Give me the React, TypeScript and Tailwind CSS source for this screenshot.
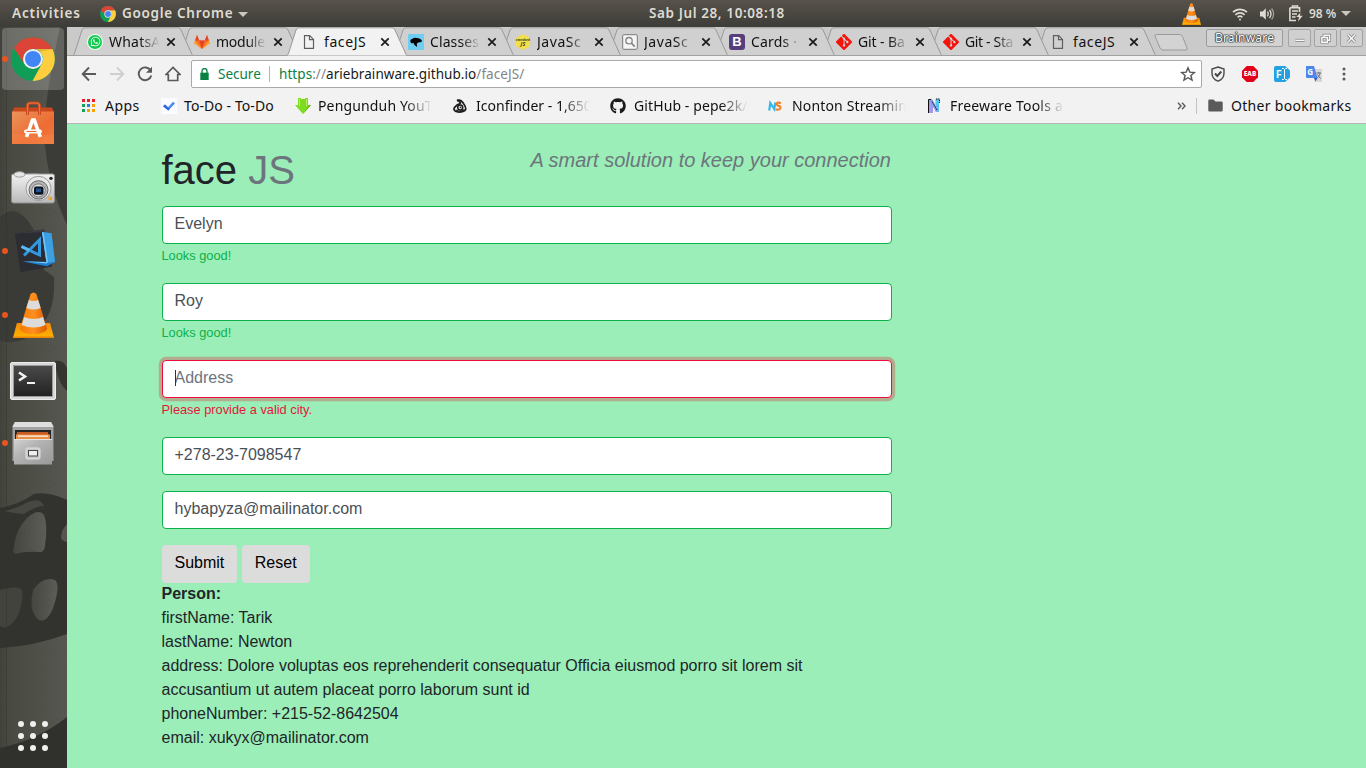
import React from "react";
import { FaGithub, FaWhatsapp } from "react-icons/fa";
import { SiGit } from "react-icons/si";

const ubuntu = "font-['Noto_Sans','Open_Sans',sans-serif]";
const liberation = "font-['Liberation_Sans',Arial,sans-serif]";

/* ---------- shared icons ---------- */

function ChromeIcon({ size }: { size: number }) {
  return (
    <svg width={size} height={size} viewBox="0 0 44 44">
      <circle cx="22" cy="22" r="22" fill="#0f9d58" />
      <path d="M2.9 11A22 22 0 0 1 41.1 11.5L41.4 12H22a10 10 0 0 0-8.7 15z" fill="#db4437" />
      <path d="M41.4 12A22 22 0 0 1 21.5 44L30.7 27A10 10 0 0 0 22 12z" fill="#ffcd40" />
      <path d="M22 12h19.4l-18 4z" fill="#000" opacity=".12" />
      <circle cx="22" cy="22" r="10" fill="#f1f1f1" />
      <circle cx="22" cy="22" r="8" fill="#4285f4" />
    </svg>
  );
}

function VlcIcon({ width, height }: { width: number; height: number }) {
  return (
    <svg width={width} height={height} viewBox="0 0 42 46" preserveAspectRatio="none">
      <defs>
        <linearGradient id="coneBase" x1="0" y1="0" x2="0" y2="1">
          <stop offset="0" stopColor="#f58a0b" />
          <stop offset="1" stopColor="#ffb400" />
        </linearGradient>
        <linearGradient id="coneBody" x1="0" y1="0" x2="1" y2="0">
          <stop offset="0" stopColor="#f57900" />
          <stop offset=".5" stopColor="#ff9020" />
          <stop offset="1" stopColor="#d95b00" />
        </linearGradient>
      </defs>
      <path d="M4 31h34l4 15H0z" fill="url(#coneBase)" />
      <path d="M18 2q3-3 6 0l11 35q-3 5-14 5T7 37z" fill="url(#coneBody)" />
      <path d="M16.200 8q4.800 1.800 9.600 0l2.500 8q-7 3-14.600 0z" fill="#dcdcdc" />
      <path d="M11.500 25q9.500 4 19.200 0l2.600 8q-12 5-24.400 0z" fill="#dcdcdc" />
      <path d="M0 44.500h42V46H0z" fill="#e8850a" />
    </svg>
  );
}

function PageIcon() {
  return (
    <svg width="16" height="16" viewBox="0 0 16 16" fill="none" stroke="#5f5f5f" strokeWidth="1.200">
      <path d="M3.500 1.600h5.200l3.800 3.800v9H3.500z" />
      <path d="M8.500 1.800v3.900h3.800" />
    </svg>
  );
}

/* ---------- top panel ---------- */

function TopPanel() {
  return (
    <header className={`flex h-[27px] shrink-0 items-center bg-linear-to-b from-[#57534b] to-[#3d3c38] text-[13.500px] font-semibold text-[#dfdbd2] ${ubuntu}`}>
      <div className="flex w-[649px] shrink-0 items-center pl-[12px]">
        <span className="w-[88px] tracking-[0.850px] whitespace-nowrap">Activities</span>
        <ChromeIcon size={16} />
        <span className="ml-[6px] w-[116px] tracking-[0.700px] whitespace-nowrap">Google Chrome</span>
        <span className="mt-px h-0 w-0 border-x-[5px] border-t-[5px] border-x-transparent border-t-[#c9c6be]" />
      </div>
      <span className="w-[140px] text-[13.500px] tracking-[0.600px] whitespace-nowrap">Sab Jul 28, 10:08:18</span>
      <div className="flex flex-1 items-center justify-end pr-[15px]">
        <VlcIcon width={19} height={22} />
        <svg className="ml-[31px]" width="16" height="16" viewBox="0 0 16 16" fill="none" stroke="#dfdbd2" strokeWidth="1.700">
          <path d="M1 6.200a10 10 0 0 1 14 0" />
          <path d="M3.400 8.800a6.600 6.600 0 0 1 9.200 0" />
          <path d="M5.600 11.300a3.600 3.600 0 0 1 4.800 0" />
          <circle cx="8" cy="13.600" r="1" fill="#dfdbd2" stroke="none" />
        </svg>
        <svg className="ml-[11px]" width="16" height="16" viewBox="0 0 16 16" fill="none" stroke="#dfdbd2" strokeWidth="1.300">
          <path d="M1 5.500h2.600L6.800 2.300v11.400L3.600 10.500H1z" fill="#dfdbd2" stroke="none" />
          <path d="M8.400 5.700q1.600 2.300 0 4.600M10.500 4q3 4 0 8" />
          <path d="M12.600 2.500q4 5.500 0 11" opacity=".6" />
        </svg>
        <svg className="ml-[13px]" width="16" height="17" viewBox="0 0 16 17">
          <path d="M4.500 2.700V1h5v1.700h2V7M1.700 2.700h10M1.900 3v12.500H8" fill="none" stroke="#dfdbd2" strokeWidth="1.600" />
          <path d="M4 5.200h6v1.600H4zM4 8.200h5v1.600H4zM4 11.200h3.500v1.600H4z" fill="#dfdbd2" />
          <path d="M12.500 7.500L8.300 12h2.700l-1 4.500 4.700-5.700h-2.800z" fill="#dfdbd2" />
        </svg>
        <span className="ml-[5px] w-[32px] text-[12px] whitespace-nowrap">98 %</span>
        <span className="h-0 w-0 border-x-[5px] border-t-[5px] border-x-transparent border-t-[#c9c6be]" />
      </div>
    </header>
  );
}

/* ---------- dock ---------- */

function Wallpaper() {
  return (
    <svg className="absolute inset-0" width="67" height="741" viewBox="0 27 67 741">
      <defs>
        <linearGradient id="wall" x1="0" y1="0" x2="1" y2="0">
          <stop offset="0" stopColor="#41423b" />
          <stop offset=".12" stopColor="#484941" />
          <stop offset="1" stopColor="#565750" />
        </linearGradient>
        <linearGradient id="wallEye" x1="0" y1="0" x2="1" y2="0">
          <stop offset="0" stopColor="#44463f" />
          <stop offset="1" stopColor="#5c5e57" />
        </linearGradient>
        <pattern id="digits" width="9" height="17" patternUnits="userSpaceOnUse">
          <ellipse cx="4" cy="8" rx="2.500" ry="3.500" fill="none" stroke="#2f332b" strokeWidth="1" opacity=".1" />
        </pattern>
      </defs>
      <rect y="27" width="67" height="741" fill="url(#wall)" />
      <path d="M60 27h7v198q-20-42-23-91 2-45 16-107z" fill="#3b3c37" />
      <path d="M0 217Q8 209 17 212 30 218 38 240l6 30 10 7q2 36-16 52-16 17-38 12z" fill="#3a3b36" />
      <path d="M55 361q8-2 12 7v23q-10-9-12-30z" fill="#34352f" />
      <path d="M0 508q20-4 34-14 14-3 33 6v134Q35 646 0 648z" fill="#32322e" />
      <path d="M4 511q14-3 24-9 12-5 16 4-8 0-20 8-12-1-20-3z" fill="#474841" />
      <path d="M14 546q2-17 13-28 12-10 17-3 4 10 1 31-1 7-6 6-14-1-23 2-4 0-2-8z" fill="url(#wallEye)" />
      <path d="M61 538q0-8 6-14v18q-5-1-6-4z" fill="#55564f" />
      <path d="M0 590q17-5 21-1 3 4 0 17-3 14-12 20-4 3-9 0z" fill="#42433d" />
      <path d="M33 590q10-14 22-10 5 4 0 22-4 15-11 18-5 2-9-4-6-9-2-26z" fill="url(#wallEye)" />
      <path d="M0 748q38-8 67-31v51H0z" fill="#30312d" />
      <rect y="27" width="67" height="741" fill="url(#digits)" />
      <path d="M6.500 27v741" stroke="#2e2f2a" strokeWidth="1" opacity=".35" />
    </svg>
  );
}

function SoftwareIcon() {
  return (
    <svg width="42" height="44" viewBox="0 0 42 44">
      <defs>
        <linearGradient id="bag" x1="0" y1="0" x2="1" y2="1">
          <stop offset="0" stopColor="#e9945c" />
          <stop offset=".6" stopColor="#ee6c33" />
          <stop offset="1" stopColor="#f07a3d" />
        </linearGradient>
      </defs>
      <path d="M2 6.500h38l2 5H0z" fill="#c9481b" />
      <path d="M0 10.500h42V43H0z" fill="url(#bag)" />
      <path d="M0 33.500h42V43H0z" fill="#f58b4f" opacity=".35" />
      <path d="M15.500 14V5q0-3 3-3h6q3 0 3 3v9" fill="none" stroke="#c4481e" strokeWidth="3" />
      <path d="M15.500 14V5q0-3 3-3h6q3 0 3 3v9" fill="none" stroke="#ee7443" strokeWidth="1.200" />
      <path d="M14.500 36l6-17h1.800l6 17" fill="none" stroke="#fff" strokeWidth="3.600" />
      <rect x="12" y="28.500" width="18" height="4" rx="2" fill="#fff" />
      <path d="M14.500 30.500h10" stroke="#e8642e" strokeWidth="1" />
    </svg>
  );
}

function CameraIcon() {
  return (
    <svg className="mt-px" width="44" height="33" viewBox="0 0 44 34" preserveAspectRatio="none">
      <defs>
        <linearGradient id="cam" x1="0" y1="0" x2="0" y2="1">
          <stop offset="0" stopColor="#f2f2f2" />
          <stop offset="1" stopColor="#b9b9b9" />
        </linearGradient>
      </defs>
      <path d="M14 3.500Q22 .5 31 3.500z" fill="#8a8a8a" />
      <rect x=".5" y="3" width="43" height="30" rx="2" fill="url(#cam)" stroke="#8c8c8c" />
      <ellipse cx="8.500" cy="3.500" rx="5.500" ry="2.800" fill="#e6e6e6" stroke="#999" />
      <circle cx="27.500" cy="18" r="12.500" fill="#e8e8e8" stroke="#999" />
      <circle cx="27.500" cy="19.500" r="9.500" fill="#b5b5b5" stroke="#666" />
      <circle cx="27.500" cy="20" r="6.800" fill="#d8d8d8" stroke="#777" />
      <rect x="23" y="16" width="9.500" height="8.500" rx="2" fill="#0c1422" />
      <rect x="25" y="18" width="5" height="3.800" fill="#28548e" />
      <circle cx="40" cy="7.500" r="1.700" fill="#222" />
      <rect x="37.500" y="26.500" width="3.500" height="3.500" fill="#efa32a" />
    </svg>
  );
}

function CodeIcon() {
  return (
    <svg className="ml-[4px]" width="42" height="44" viewBox="0 0 42 44">
      <path d="M1 4.500L30 .5l8 37L6.500 43z" fill="#2c2c33" />
      <path d="M1 4.500l29-4 .6 2.500z" fill="#3b3b43" />
      <path d="M28 3l9.500 1.200L41 33l-8 4.300L8.500 32.500l24 .5z" fill="#1b80d0" />
      <path d="M28 3l9.500 1.200L41 33l-8.500 1z" fill="#3c9fe4" />
      <path d="M28 3l1.500.2L34 33.500l-1.500.3z" fill="#74c6f6" />
      <path d="M8.500 32.300l24 .7.500 1.400z" fill="#74c6f6" />
      <path d="M7.500 17.500L25.500 26V10.800L10 26.500" fill="none" stroke="#3398df" strokeWidth="3" />
      <path d="M7.500 17.500l8 3.800" stroke="#5cb8f0" strokeWidth="3" />
    </svg>
  );
}

function TerminalIcon() {
  return (
    <svg className="mt-[3px]" width="46" height="38" viewBox="0 0 46 38">
      <defs>
        <linearGradient id="term" x1="0" y1="0" x2="0" y2="1">
          <stop offset="0" stopColor="#4a4a4a" />
          <stop offset="1" stopColor="#222" />
        </linearGradient>
      </defs>
      <rect x=".5" y=".5" width="45" height="37" rx="1.500" fill="#d8d8d8" stroke="#ececec" />
      <rect x="3" y="3" width="40" height="32" fill="#9c9c9c" />
      <rect x="4" y="4" width="38" height="30" fill="url(#term)" />
      <path d="M9 10.500l6 4-6 4" fill="none" stroke="#f2f2f2" strokeWidth="2.600" />
      <path d="M17 21h8" stroke="#f2f2f2" strokeWidth="2" />
    </svg>
  );
}

function FilesIcon() {
  return (
    <svg className="-mt-px" width="42" height="44" viewBox="0 0 42 44">
      <defs>
        <linearGradient id="drawer" x1="0" y1="0" x2="1" y2="1">
          <stop offset="0" stopColor="#d2d2d2" />
          <stop offset=".4" stopColor="#b3b3b3" />
          <stop offset="1" stopColor="#999" />
        </linearGradient>
      </defs>
      <path d="M3 1h36l2.500 4v35H.5V5z" fill="#a2a2a2" />
      <path d="M3 1h36l2.500 5H.5z" fill="#dedede" />
      <path d="M3 9h36v10H3z" fill="#242424" />
      <path d="M5 11h31l1.500 8H4z" fill="#c75a20" />
      <path d="M4 13.500h34V19H4z" fill="#e98d40" />
      <path d="M6 14.500h30v1.200H6z" fill="#fff" />
      <path d="M2 18h38v25.500H2z" fill="url(#drawer)" />
      <path d="M2 18.500h38" stroke="#e4e4e4" />
      <rect x="14" y="27" width="14" height="11" rx="1.500" fill="#c9c9c9" stroke="#e1e1e1" />
      <rect x="16.500" y="29.500" width="9" height="5.500" fill="#eee" stroke="#444" />
    </svg>
  );
}

const dockItems = [
  { icon: <ChromeIcon size={44} />, running: true, active: true },
  { icon: <SoftwareIcon />, running: false },
  { icon: <CameraIcon />, running: false },
  { icon: <CodeIcon />, running: true },
  { icon: <VlcIcon width={41} height={46} />, running: true },
  { icon: <TerminalIcon />, running: false },
  { icon: <FilesIcon />, running: true },
];

function Dock() {
  return (
    <aside className="relative w-[67px] shrink-0 overflow-hidden bg-[#4b4c45]">
      <Wallpaper />
      <div className="relative flex h-full flex-col">
        {dockItems.map((item, i) => (
          <div key={i} className="flex h-[64px] shrink-0 items-center">
            <span className={`ml-[2px] size-[5.500px] shrink-0 rounded-full ${item.running ? "relative z-10 bg-[#e95420]" : ""}`} />
            <div className={`-ml-[5.500px] flex size-[62px] items-center justify-center rounded-[4px] ${item.active ? "bg-white/20" : ""}`}>
              {item.icon}
            </div>
          </div>
        ))}
        <div className="mt-auto mb-[17px] ml-[18px] grid w-[30px] grid-cols-3 gap-[6px]">
          {Array.from({ length: 9 }, (_, i) => (
            <span key={i} className="size-[6px] rounded-full bg-[#f0f0ee]" />
          ))}
        </div>
      </div>
    </aside>
  );
}

/* ---------- browser tabs ---------- */

function GitlabIcon() {
  return (
    <svg width="16" height="16" viewBox="0 0 16 16">
      <path d="M8 15L.2 9.300l1-3.300L3 1l2.200 5.500h5.600L13 1l1.800 5 1 3.300z" fill="#fc6d26" />
      <path d="M8 15L5.200 6.500h5.600z" fill="#e24329" />
      <path d="M.2 9.300l1-2.800L8 15zM15.800 9.300l-1-2.800L8 15z" fill="#fca326" />
      <path d="M1.200 6.500L3 1l2.200 5.500zM14.800 6.500L13 1l-2.200 5.500z" fill="#e24329" />
    </svg>
  );
}

function MdnIcon() {
  return (
    <svg width="16" height="16" viewBox="0 0 16 16">
      <path d="M0 0h16v16H0z" fill="#6fcdf2" />
      <path d="M2.200 7q.3-1.800 2.300-2.300Q6.500 3 10 4.200q3.300.3 4 3-1.200 1.300-4 1.300l-1.200 1.200.3 3.300-2.600-2-1.200-2.200q-1.800 1-2.300.2z" fill="#000" />
    </svg>
  );
}

function StandardJsIcon() {
  return (
    <svg width="16" height="16" viewBox="0 0 16 16">
      <path d="M8 0l7 4v8l-7 4-7-4V4z" fill="#f3df49" />
      <text x="8" y="7" textAnchor="middle" fontSize="3.200" fontWeight="700" fontFamily="Noto Sans" fill="#4d4820">standard</text>
      <text x="8" y="12" textAnchor="middle" fontSize="5.500" fontWeight="700" fontStyle="italic" fontFamily="Noto Sans" fill="#4d4820">JS</text>
    </svg>
  );
}

function SearchPageIcon() {
  return (
    <svg width="16" height="16" viewBox="0 0 16 16" fill="none">
      <rect x=".7" y=".7" width="14.600" height="14.600" rx="1" fill="#f5f5f5" stroke="#777" />
      <circle cx="7" cy="6.700" r="3.200" stroke="#858585" strokeWidth="1.300" />
      <path d="M9.300 9l3.400 3.600" stroke="#858585" strokeWidth="1.800" />
    </svg>
  );
}

function BootstrapIcon() {
  return (
    <span className="flex size-4 items-center justify-center rounded-[3px] bg-[#563d7c] font-['Liberation_Sans',sans-serif] text-[13px] leading-none font-bold text-white">B</span>
  );
}

function WhatsappIcon() {
  return (
    <span className="flex size-4 items-center justify-center rounded-full bg-[#f4fff5]">
      <span className="flex size-[14px] items-center justify-center rounded-full bg-[#0cc94c]">
        <FaWhatsapp size={11} color="#fff" />
      </span>
    </span>
  );
}

const tabs = [
  { title: "WhatsA", icon: <WhatsappIcon />, z: "z-[10]", track: "tracking-[0.200px]" },
  { title: "module", icon: <GitlabIcon />, z: "z-[9]", track: "tracking-[-0.250px]" },
  { title: "faceJS", icon: <PageIcon />, z: "z-[20]", track: "tracking-[0.600px]", active: true },
  { title: "Classes", icon: <MdnIcon />, z: "z-[8]", track: "tracking-[0.100px]" },
  { title: "JavaSc", icon: <StandardJsIcon />, z: "z-[7]", track: "tracking-[0.550px]" },
  { title: "JavaSc", icon: <SearchPageIcon />, z: "z-[6]", track: "tracking-[0.550px]" },
  { title: "Cards ·", icon: <BootstrapIcon />, z: "z-[5]", track: "tracking-[0.200px]" },
  { title: "Git - Ba", icon: <SiGit size={16} color="#f4120b" />, z: "z-[4]", track: "tracking-[-0.100px]" },
  { title: "Git - Sta", icon: <SiGit size={16} color="#f4120b" />, z: "z-[3]", track: "tracking-[-0.350px]" },
  { title: "faceJS", icon: <PageIcon />, z: "z-[2]", track: "tracking-[0.600px]" },
];

function TabStrip() {
  return (
    <div className="flex h-[29px] shrink-0 border-b border-[#a0a0a0] bg-[#cacaca] pl-[6px]">
      {tabs.map((tab, i) => (
        <div key={i} className={`relative -mr-[13px] flex h-[29px] w-[120px] shrink-0 items-center pl-[14px] ${tab.z}`}>
          <svg className="absolute inset-0" width="120" height="29" viewBox="0 0 120 29">
            <path d="M0 28.500Q1 28 1.600 26L9 3Q10 .8 12 .8h93q2.200 0 3 2.200L118.400 26q.6 2 1.600 2.500z" fill={tab.active ? "#f2f2f2" : "#d0d0d0"} />
            <path d="M0 28.500Q1 28 1.600 26L9 3Q10 .8 12 .8h93q2.200 0 3 2.200L118.400 26q.6 2 1.600 2.500" fill="none" stroke="#999" />
            {!tab.active && <path d="M0 28.500h120" stroke="#a0a0a0" />}
          </svg>
          <span className="relative flex size-4 shrink-0 items-center justify-center">{tab.icon}</span>
          <span className={`relative w-[52px] whitespace-nowrap text-[14px] text-[#111] ${ubuntu} ${tab.track} ${tab.title === "faceJS" ? "ml-[7px]" : "ml-[6px] mask-[linear-gradient(to_right,#000_60%,transparent_97%)]"}`}>
            {tab.title}
          </span>
          <svg className="absolute top-[10px] left-[93px]" width="10" height="10" viewBox="0 0 10 10" stroke="#1a1a1a" strokeWidth="1.700">
            <path d="M1.300 1.300l7.400 7.400M8.700 1.300L1.300 8.700" />
          </svg>
        </div>
      ))}
      <svg className="mt-[6px] ml-[10px]" width="36" height="19" viewBox="0 0 36 19">
        <path d="M3.500 1.500h23q2 0 3 2L34 15q.800 2-1 2H10q-2 0-3-2L2 3q-.500-1.500 1.500-1.500z" fill="#d3d3d3" stroke="#9a9a9a" />
      </svg>
      <div className="mr-[3px] ml-auto flex gap-[3px] pt-[2px]">
        <div className={`mr-px flex h-[18px] w-[77px] items-center justify-center rounded-[2px] border border-[#9c9c9c] bg-[#d2d2d2] text-[12px] tracking-[0.200px] text-white [text-shadow:0_0_1px_#222,0_0_1px_#222,0_0_2px_#444,0_0_1px_#222,0_0_1px_#222] ${ubuntu}`}>Brainware</div>
        {[
          <path key="a" d="M7 10.500h10" />,
          <path key="b" d="M7.500 7.500h6v5h-6zM10 7V5h6v5.500h-2" />,
          <path key="c" d="M7.500 4l8 8.500M15.500 4l-8 8.500" />,
        ].map((shape, i) => (
          <div key={i} className={`flex h-[18px] w-[23px] items-center justify-center rounded-[2px] border border-[#a3a3a3] bg-[#d0d0d0] ${i === 0 ? "ml-px" : ""}`}>
            <svg width="23" height="17" viewBox="0 0 23 17" fill="none">
              <g stroke="#808080" strokeWidth="3.200">{shape}</g>
              <g stroke="#f8f8f8" strokeWidth="1.600">{shape}</g>
            </svg>
          </div>
        ))}
      </div>
    </div>
  );
}

/* ---------- address bar ---------- */

function Toolbar() {
  return (
    <div className="flex h-[32px] shrink-0 items-center bg-[#f2f2f2] pt-[4px] pl-[14px]">
      <svg width="16" height="16" viewBox="0 0 16 16" fill="none" stroke="#5a5a5a" strokeWidth="1.900">
        <path d="M15 8H2M8 1.500L1.700 8 8 14.500" />
      </svg>
      <svg className="ml-[12px]" width="16" height="16" viewBox="0 0 16 16" fill="none" stroke="#cfcfcf" strokeWidth="1.900">
        <path d="M1 8h13M8 1.500L14.300 8 8 14.500" />
      </svg>
      <svg className="ml-[12px]" width="16" height="16" viewBox="0 0 16 16" fill="none" stroke="#5a5a5a" strokeWidth="1.900">
        <path d="M13.600 4.500A6.400 6.400 0 1 0 14.300 9.500" />
        <path d="M15 .8v6H9z" fill="#5a5a5a" stroke="none" />
      </svg>
      <svg className="ml-[12px]" width="16" height="16" viewBox="0 0 16 16" fill="none" stroke="#5a5a5a" strokeWidth="1.700">
        <path d="M1 8.500L8 1.500l7 7h-2.300v6H3.300v-6z" />
      </svg>
      <div className={`ml-[10px] flex h-[28px] w-[1011px] shrink-0 items-center rounded-[2px] border border-[#aaa] bg-white text-[13.500px] ${ubuntu}`}>
        <svg className="ml-[8px]" width="9" height="12" viewBox="0 0 9 12">
          <path d="M.3 4.700h8.400V12H.3z" fill="#0b8043" />
          <path d="M2 5V3a2.500 2.500 0 0 1 5 0v2" fill="none" stroke="#0b8043" strokeWidth="1.300" />
        </svg>
        <span className="ml-[9px] w-[51px] text-[#0b8043] whitespace-nowrap">Secure</span>
        <span className="h-[16px] w-px bg-[#b5b5b5]" />
        <span className="ml-[9px] whitespace-nowrap text-[#858585] tracking-[0.060px]">
          <span className="text-[#0b8043]">https</span>://<span className="text-[#1a1a1a]">ariebrainware.github.io</span>/faceJS/
        </span>
        <svg className="mr-[5px] ml-auto" width="16" height="16" viewBox="0 0 16 16" fill="none" stroke="#555" strokeWidth="1.400">
          <path d="M8 1.800l1.800 4.300 4.600.4-3.500 3 1.100 4.600L8 11.700l-4 2.400 1.100-4.600-3.500-3 4.600-.4z" />
        </svg>
      </div>
      <svg className="ml-[8px]" width="16" height="16" viewBox="0 0 16 16" fill="none" stroke="#4a4a4a">
        <path d="M8 1l6 2v4q0 6-6 8.200Q2 13 2 7V3z" strokeWidth="1.400" />
        <path d="M5 7.500L7.300 10l4-4.500" strokeWidth="2" />
      </svg>
      <svg className="ml-[16px]" width="16" height="16" viewBox="0 0 16 16">
        <path d="M4.700 0h6.600L16 4.700v6.600L11.300 16H4.700L0 11.300V4.700z" fill="#e2001a" />
        <text x="8" y="10.300" textAnchor="middle" fontSize="6.500" fontWeight="800" fontFamily="Noto Sans" fill="#fff">EAB</text>
      </svg>
      <svg className="ml-[16px]" width="16" height="16" viewBox="0 0 16 16">
        <path d="M2 0h9l5 4.500v7L11 16H2q-2 0-2-2V2q0-2 2-2z" fill="#23a1e1" />
        <text x="1.800" y="12" fontSize="11" fontWeight="600" fontFamily="Noto Sans" fill="#fff">F</text>
        <path d="M8 2.500h1.500l1 1 1-1H13M10.500 3.500v9M8 13.500h1.500l1-1 1 1H13" stroke="#fff" fill="none" />
      </svg>
      <svg className="ml-[16px]" width="16" height="16" viewBox="0 0 16 16">
        <path d="M5 3h11v13H9z" fill="#d8d8d8" />
        <path d="M0 0h8l3.500 12H1q-1 0-1-1z" fill="#4f86ec" />
        <path d="M8 12h3.500l-2 3.500z" fill="#2f56c4" />
        <text x="1.300" y="9" fontSize="8" fontWeight="700" fontFamily="Noto Sans" fill="#fff">G</text>
        <path d="M10.500 7h4.500M12.700 6v1M14.200 7q-.6 3-3 5M11.500 8.500q1 2.300 3.300 4" fill="none" stroke="#68717a" />
      </svg>
      <svg className="ml-[14px]" width="16" height="16" viewBox="0 0 16 16" fill="#5a5a5a">
        <circle cx="8" cy="3" r="1.500" />
        <circle cx="8" cy="8" r="1.500" />
        <circle cx="8" cy="13" r="1.500" />
      </svg>
    </div>
  );
}

/* ---------- bookmarks ---------- */

function AppsIcon() {
  return (
    <span className="grid grid-cols-3 gap-[2px]">
      <i className="size-[3px] bg-[#e8202a]" /><i className="size-[3px] bg-[#e8202a]" /><i className="size-[3px] bg-[#e8202a]" />
      <i className="size-[3px] bg-[#12a05c]" /><i className="size-[3px] bg-[#2c7be5]" /><i className="size-[3px] bg-[#f5a300]" />
      <i className="size-[3px] bg-[#12a05c]" /><i className="size-[3px] bg-[#f5a300]" /><i className="size-[3px] bg-[#f5a300]" />
    </span>
  );
}

function CheckIcon() {
  return (
    <svg width="16" height="16" viewBox="0 0 16 16">
      <path d="M0 0h16v16H0z" fill="#fafcff" />
      <path d="M2 8.300l2-1.900 3 2.900L12 3.800l2 1.700L7.300 12.600z" fill="#4a8cf7" />
      <path d="M2 8.300l2-1.900 4.900 4.600-1.600 1.600z" fill="#3566e0" />
    </svg>
  );
}

function DownIcon() {
  return (
    <svg width="16" height="16" viewBox="0 0 16 16">
      <path d="M3 0h3v1h4V0h3v7h3l-8 9-8-9h3z" fill="#7fdb20" />
      <path d="M4.500 1v7M11.500 1v7" stroke="#b7ef6c" />
      <path d="M8 16l8-9h-2z" fill="#64bd12" />
    </svg>
  );
}

function EyeIcon() {
  return (
    <svg width="14" height="14" viewBox="0 0 14 14" fill="none" stroke="#1c1c1c">
      <path d="M4 1.500Q8 0 10.500 4.500 14 9.500 12 11.500 8 14 3 12.500 0 11 1.500 8.500 4 5 8 4.500" strokeWidth="1.700" />
      <path d="M4 1.200q2.500 1 3.800 2.800" strokeWidth="1.800" />
      <circle cx="7.200" cy="8.500" r="2.500" strokeWidth="1.500" />
      <circle cx="7.500" cy="8.300" r=".9" fill="#1c1c1c" stroke="none" />
      <path d="M2.500 11q4.500 2.500 9-.5" strokeWidth="1.300" />
    </svg>
  );
}

function NontonIcon() {
  return (
    <svg width="14" height="12" viewBox="0 0 14 12" fill="none" strokeWidth="2.200">
      <path d="M1.200 10.500L2.300 3l4 6 1-6.500" stroke="#35b5e8" />
      <path d="M13 3.200q-4-1.500-4.300.8 0 1.400 2 1.800 2.300.7 1.600 2.700-1.300 2-4.600.7" stroke="#f2842e" />
    </svg>
  );
}

function FreewareIcon() {
  return (
    <svg width="14" height="16" viewBox="0 0 14 16">
      <path d="M2 2h4v13H2z" fill="#a596f2" />
      <path d="M8.500 1H12v13H8.500z" fill="#4fc8f0" />
      <path d="M3.500 1.500l7 12" stroke="#8aa0ee" strokeWidth="3" />
      <path d="M5 3.500l5 8.500M9 1h3.500v4" stroke="#111" fill="none" strokeDasharray="1.500 .7" />
      <path d="M1.500 15V1.500H4" stroke="#111" fill="none" />
    </svg>
  );
}

const fade = "mask-[linear-gradient(to_right,#000_75%,transparent_98%)]";

const bookmarks = [
  { icon: <AppsIcon />, label: "Apps", cell: "w-[79px]", text: "ml-[10px] w-[40px] tracking-[0.450px]" },
  { icon: <CheckIcon />, label: "To-Do - To-Do", cell: "w-[134px]", text: "ml-[7px] w-[96px] tracking-[0.080px]" },
  { icon: <DownIcon />, label: "Pengunduh YouT", cell: "w-[158px]", text: "ml-[7px] w-[116px] tracking-[0.150px]", fade },
  { icon: <EyeIcon />, label: "Iconfinder - 1,650", cell: "w-[157px]", text: "ml-[9px] w-[116px] tracking-[0.020px]", fade },
  { icon: <FaGithub size={16} color="#1b1b1b" />, label: "GitHub - pepe2k/", cell: "w-[158px]", text: "ml-[8px] w-[116px] tracking-[0.100px]", fade },
  { icon: <NontonIcon />, label: "Nonton Streamin", cell: "w-[159px]", text: "ml-[10px] w-[116px] tracking-[0.150px]", fade },
  { icon: <FreewareIcon />, label: "Freeware Tools a", cell: "w-[160px]", text: "ml-[9px] w-[116px] tracking-[0.200px]", fade },
];

function BookmarkBar() {
  return (
    <div className={`flex h-[36px] shrink-0 items-center border-b border-[#b6b6b6] bg-[#f2f2f2] pl-[15px] text-[14px] text-[#111] ${ubuntu}`}>
      {bookmarks.map((b) => (
        <div key={b.label} className={`flex shrink-0 items-center ${b.cell}`}>
          {b.icon}
          <span className={`shrink-0 whitespace-nowrap ${b.text} ${b.fade ?? ""}`}>{b.label}</span>
        </div>
      ))}
      <div className="mr-[14px] ml-auto flex items-center">
        <svg width="9" height="8" viewBox="0 0 9 8" fill="none" stroke="#5a5a5a" strokeWidth="1.400">
          <path d="M1 .8L4 4 1 7.200M5 .8L8 4 5 7.200" />
        </svg>
        <span className="ml-[10px] h-[16px] w-px bg-[#c2c2c2]" />
        <svg className="ml-[11px]" width="15" height="13" viewBox="0 0 15 13">
          <path d="M1.500.5h4l2 2h6q1.200 0 1.200 1.200v7.600q0 1.200-1.200 1.200h-12Q.3 12.500.3 11.300V1.700Q.3.5 1.500.5z" fill="#5a5a5a" />
        </svg>
        <span className="ml-[8px] w-[121px] whitespace-nowrap tracking-[0.300px]">Other bookmarks</span>
      </div>
    </div>
  );
}

/* ---------- page ---------- */

const fieldClass = "block h-[38px] w-full rounded-[4px] border bg-white px-[12px] pt-[5px] pb-[7px] text-[16px] leading-[24px] text-[#495057] outline-none placeholder:text-[#6c757d] placeholder:opacity-100";
const feedbackClass = "mt-[2px] h-[21px] text-[12.800px] leading-[19px]";

function Page() {
  return (
    <main className={`flex-1 overflow-hidden bg-[#9beeb7] pt-[22px] pl-[94.500px] text-[16px] leading-[24px] text-[#212529] ${liberation}`}>
      <div className="w-[730px]">
        <div className="flex h-[60px] items-start justify-between">
          <h1 className="text-[40px] leading-[48px]">face <span className="text-[#6c757d]">JS</span></h1>
          <p className="-mt-px mr-[0.500px] text-[20px] leading-[30px] text-[#6c757d] italic">A smart solution to keep your connection</p>
        </div>
        <form className="flex flex-col gap-[16px]">
          <div>
            <input className={`${fieldClass} border-[#0cb14b]`} defaultValue="Evelyn" />
            <p className={`${feedbackClass} text-[#0cb14b]`}>Looks good!</p>
          </div>
          <div>
            <input className={`${fieldClass} border-[#0cb14b]`} defaultValue="Roy" />
            <p className={`${feedbackClass} text-[#0cb14b]`}>Looks good!</p>
          </div>
          <div className="relative">
            <input className={`${fieldClass} border-[#ee0a3c] shadow-[0_0_0_3.200px_rgba(220,53,69,0.350)]`} placeholder="Address" />
            <span className="absolute top-[10px] left-[13px] h-[16px] w-px bg-[#333]" />
            <p className={`${feedbackClass} text-[#e3173e]`}>Please provide a valid city.</p>
          </div>
          <input className={`${fieldClass} border-[#0cb14b]`} defaultValue="+278-23-7098547" />
          <input className={`${fieldClass} border-[#0cb14b]`} defaultValue="hybapyza@mailinator.com" />
          <div className="flex gap-[4.500px] text-black">
            <button type="button" className="h-[38px] rounded-[4px] bg-[#dcdcdc] px-[13px] pb-[2px]">Submit</button>
            <button type="button" className="h-[38px] rounded-[4px] bg-[#dcdcdc] px-[13px] pb-[2px]">Reset</button>
          </div>
        </form>
        <div className="-mt-px">
          <p className="font-bold">Person:</p>
          <p>firstName: Tarik</p>
          <p>lastName: Newton</p>
          <p>address: Dolore voluptas eos reprehenderit consequatur Officia eiusmod porro sit lorem sit accusantium ut autem placeat porro laborum sunt id</p>
          <p>phoneNumber: +215-52-8642504</p>
          <p>email: xukyx@mailinator.com</p>
        </div>
      </div>
    </main>
  );
}

export default function App() {
  return (
    <div className="flex h-[768px] w-[1366px] flex-col overflow-hidden">
      <TopPanel />
      <div className="flex min-h-0 flex-1">
        <Dock />
        <div className="flex min-w-0 flex-1 flex-col">
          <TabStrip />
          <Toolbar />
          <BookmarkBar />
          <Page />
        </div>
      </div>
    </div>
  );
}
